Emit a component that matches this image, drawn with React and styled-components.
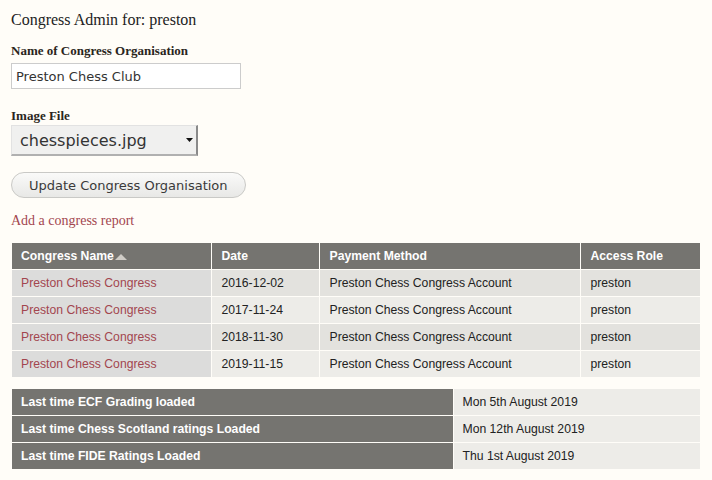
import React from "react";
import styled, { createGlobalStyle } from "styled-components";

const GlobalStyle = createGlobalStyle`
  html, body {
    margin: 0;
    padding: 0;
    background: #fffdf8;
  }
`;

const Page = styled.div`
  padding: 10px 11px 0 11px;
  font-family: "Liberation Serif", "Times New Roman", serif;
  color: #222;
`;

const Title = styled.h1`
  margin: 0;
  font-size: 16px;
  font-weight: normal;
  line-height: 20px;
  color: #222;
`;

const Field = styled.div`
  margin-top: ${(p) => p.$top}px;
  display: flex;
  flex-direction: column;
  align-items: flex-start;
`;

const Label = styled.label`
  font-size: 13px;
  font-weight: bold;
  line-height: 16px;
  color: #2a2520;
`;

const TextInput = styled.input`
  box-sizing: border-box;
  margin-top: 4px;
  width: 230px;
  height: 26px;
  padding: 0 4px;
  border: 1px solid #ccc;
  background: #fff;
  font-family: "DejaVu Sans", sans-serif;
  font-size: 13px;
  color: #333;
  outline: none;
`;

const SelectBox = styled.div`
  box-sizing: border-box;
  margin-top: 1px;
  width: 187px;
  height: 31px;
  display: flex;
  align-items: center;
  justify-content: space-between;
  padding: 0 3px 0 8px;
  background: #f0f0ef;
  border-top: 1px solid #e2e2e2;
  border-left: 1px solid #e2e2e2;
  border-right: 2px solid #8a8a8a;
  border-bottom: 2px solid #b0b0b0;
  font-family: "DejaVu Sans", sans-serif;
  font-size: 16px;
  color: #333;
`;

const Button = styled.button`
  box-sizing: border-box;
  margin-top: 16px;
  height: 26px;
  padding: 0 17px;
  border: 1px solid #c9c9c6;
  border-radius: 13px;
  background: linear-gradient(#fafaf9, #e8e8e6);
  font-family: "DejaVu Sans", sans-serif;
  font-size: 13px;
  color: #3a3a3a;
  cursor: pointer;
`;

const ActionLink = styled.a`
  display: block;
  margin-top: 15px;
  font-size: 14px;
  line-height: 16px;
  color: #a3464f;
  text-decoration: none;
`;

const Table = styled.table`
  margin-top: ${(p) => p.$top}px;
  margin-left: 1px;
  width: 688px;
  border-collapse: collapse;
  table-layout: fixed;
  font-family: "Liberation Sans", Arial, sans-serif;
  font-size: 12.2px;
`;

const Th = styled.th`
  height: 26px;
  padding: 0 0 0 10px;
  text-align: left;
  background: #757470;
  color: #fff;
  font-weight: bold;
  border: 1px solid #fffdf8;
  border-top: none;
  &:first-child { border-left: none; padding-left: 9px; }
  &:last-child { border-right: none; }
`;

const Td = styled.td`
  height: 26px;
  padding: 0 0 0 10px;
  background: ${(p) => (p.$active ? "#dcdcdb" : p.$odd ? "#e3e2de" : "#edece8")};
  color: #222;
  border: 1px solid #fffdf8;
  &:first-child { border-left: none; padding-left: 9px; }
  &:last-child { border-right: none; }
`;

const RowLink = styled.a`
  color: #a3464f;
  text-decoration: none;
`;

const InfoHead = styled.td`
  height: 26px;
  padding: 0 0 0 9px;
  background: #757470;
  color: #fff;
  font-weight: bold;
  border: 1px solid #fffdf8;
  border-left: none;
`;

const InfoValue = styled.td`
  height: 26px;
  padding: 0 0 0 9px;
  background: #edece8;
  color: #222;
  border: 1px solid #fffdf8;
  border-right: none;
`;

const congresses = [
  { date: "2016-12-02" },
  { date: "2017-11-24" },
  { date: "2018-11-30" },
  { date: "2019-11-15" },
];

const loads = [
  ["Last time ECF Grading loaded", "Mon 5th August 2019"],
  ["Last time Chess Scotland ratings Loaded", "Mon 12th August 2019"],
  ["Last time FIDE Ratings Loaded", "Thu 1st August 2019"],
];

function SortArrow() {
  return (
    <svg width="12" height="7" viewBox="0 0 12 7" style={{ marginLeft: 1 }}>
      <polygon points="0,7 6,1 12,7" fill="#cfccc6" />
    </svg>
  );
}

function Caret() {
  return (
    <svg width="7" height="4" viewBox="0 0 7 4">
      <polygon points="0,0 7,0 3.5,4" fill="#111" />
    </svg>
  );
}

export default function App() {
  return (
    <>
      <GlobalStyle />
      <Page>
        <Title>Congress Admin for: preston</Title>
        <Field $top={13}>
          <Label>Name of Congress Organisation</Label>
          <TextInput defaultValue="Preston Chess Club" />
        </Field>
        <Field $top={19}>
          <Label>Image File</Label>
          <SelectBox>
            <span>chesspieces.jpg</span>
            <Caret />
          </SelectBox>
          <Button>Update Congress Organisation</Button>
        </Field>
        <ActionLink href="#">Add a congress report</ActionLink>

        <Table $top={14}>
          <colgroup>
            <col style={{ width: 199 }} />
            <col style={{ width: 108 }} />
            <col style={{ width: 261 }} />
            <col style={{ width: 120 }} />
          </colgroup>
          <thead>
            <tr>
              <Th>
                Congress Name
                <SortArrow />
              </Th>
              <Th>Date</Th>
              <Th>Payment Method</Th>
              <Th>Access Role</Th>
            </tr>
          </thead>
          <tbody>
            {congresses.map((c, i) => (
              <tr key={c.date}>
                <Td $active>
                  <RowLink href="#">Preston Chess Congress</RowLink>
                </Td>
                <Td $odd={i % 2 === 0}>{c.date}</Td>
                <Td $odd={i % 2 === 0}>Preston Chess Congress Account</Td>
                <Td $odd={i % 2 === 0}>preston</Td>
              </tr>
            ))}
          </tbody>
        </Table>

        <Table $top={10}>
          <colgroup>
            <col style={{ width: 441 }} />
            <col style={{ width: 247 }} />
          </colgroup>
          <tbody>
            {loads.map(([label, value]) => (
              <tr key={label}>
                <InfoHead>{label}</InfoHead>
                <InfoValue>{value}</InfoValue>
              </tr>
            ))}
          </tbody>
        </Table>
      </Page>
    </>
  );
}
